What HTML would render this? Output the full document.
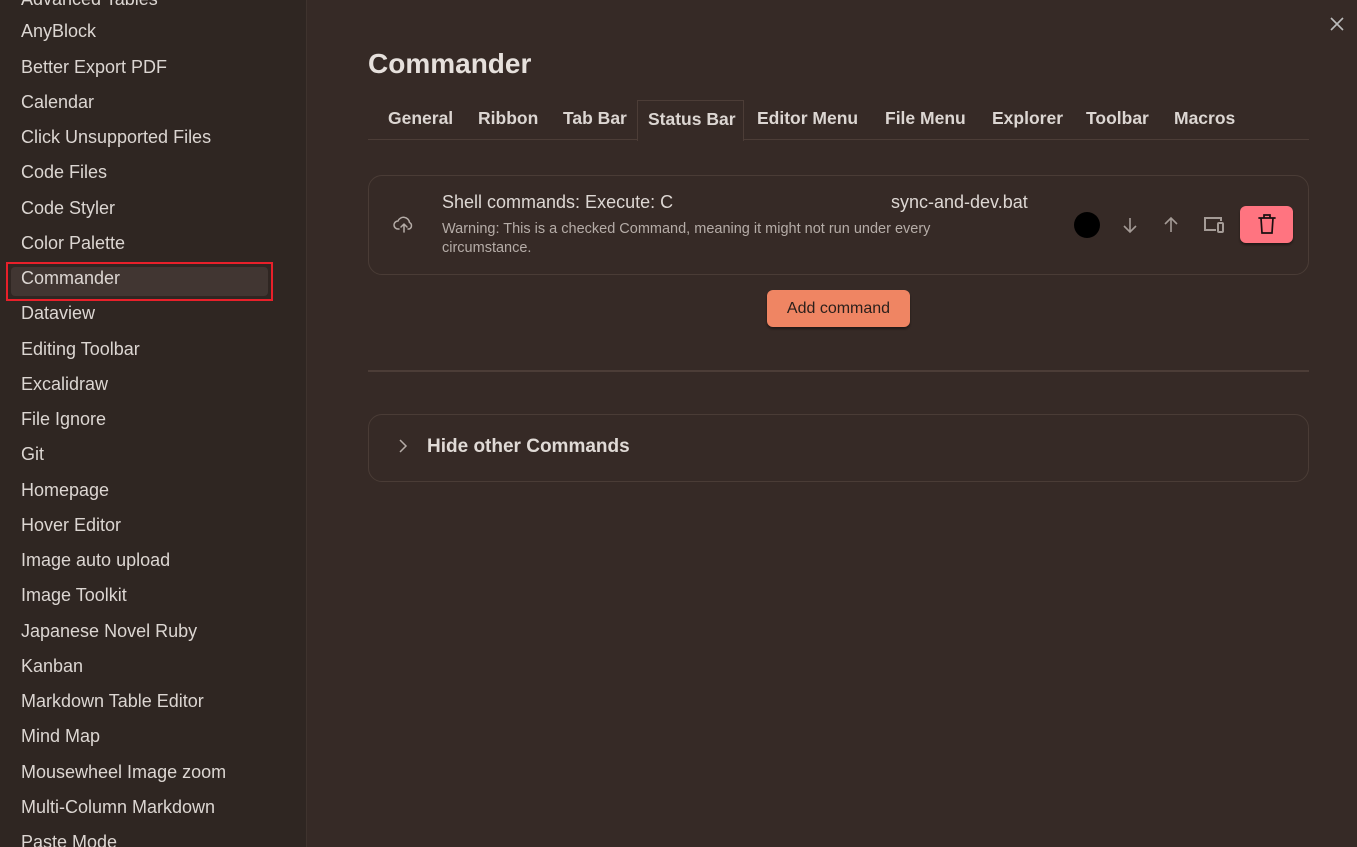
<!DOCTYPE html>
<html><head><meta charset="utf-8"><style>
*{margin:0;padding:0;box-sizing:border-box}
body{width:1357px;height:847px;overflow:hidden;background:#362a26;font-family:"Liberation Sans",sans-serif;color:#ddd;position:relative}
.side{position:absolute;left:0;top:0;width:307px;height:847px;background:#2f2622;border-right:1px solid #3f332e;overflow:hidden}
.side div{position:absolute;left:21px;font-size:18px;color:#dcd6d2;white-space:nowrap;line-height:22px}
.sel{position:absolute;left:6px;top:262px;width:267px;height:39px;border:2px solid #e8202a;}
.sel i{position:absolute;left:3px;top:3px;right:3px;bottom:3px;background:#413632;border-radius:4px}
h1{position:absolute;left:368px;top:48px;font-size:28px;font-weight:bold;color:#e6e0dc}
.tabs{position:absolute;left:368px;top:139px;width:941px;border-top:1px solid #4c3d37}
.tab{position:absolute;top:108px;font-size:17.5px;font-weight:bold;color:#dcd6d2}
.active{position:absolute;left:637px;top:100px;width:107px;height:41px;border:1px solid #4c3d37;border-bottom:none;background:#362a26}
.card{position:absolute;left:368px;top:175px;width:941px;height:100px;border:1px solid #4a3c36;border-radius:14px}
.t1{position:absolute;left:442px;top:192px;font-size:18px;color:#ddd7d3}
.t2{position:absolute;left:442px;top:220px;font-size:14.5px;color:#b5aca7;line-height:19px;width:560px}
.btn{position:absolute;left:767px;top:290px;width:143px;height:37px;background:#ef8563;border-radius:6px;color:#2a1f1b;font-size:16px;text-align:center;line-height:37px;box-shadow:0 2px 2px rgba(0,0,0,.4)}
.hr{position:absolute;left:368px;top:370px;width:941px;border-top:2px solid #4c3d37}
.card2{position:absolute;left:368px;top:414px;width:941px;height:68px;border:1px solid #4a3c36;border-radius:14px}
.del{position:absolute;left:1240px;top:206px;width:53px;height:37px;background:#ff7480;border-radius:6px;box-shadow:0 2px 2px rgba(0,0,0,.4)}
</style></head><body>
<div class="side">
<div style="top:-12px">Advanced Tables</div>
<div style="top:20px">AnyBlock</div>
<div style="top:56px">Better Export PDF</div>
<div style="top:91px">Calendar</div>
<div style="top:126px">Click Unsupported Files</div>
<div style="top:161px">Code Files</div>
<div style="top:197px">Code Styler</div>
<div style="top:232px">Color Palette</div>
<span class="sel"><i></i></span>
<div style="top:267px">Commander</div>
<div style="top:302px">Dataview</div>
<div style="top:338px">Editing Toolbar</div>
<div style="top:373px">Excalidraw</div>
<div style="top:408px">File Ignore</div>
<div style="top:443px">Git</div>
<div style="top:479px">Homepage</div>
<div style="top:514px">Hover Editor</div>
<div style="top:549px">Image auto upload</div>
<div style="top:584px">Image Toolkit</div>
<div style="top:620px">Japanese Novel Ruby</div>
<div style="top:655px">Kanban</div>
<div style="top:690px">Markdown Table Editor</div>
<div style="top:725px">Mind Map</div>
<div style="top:761px">Mousewheel Image zoom</div>
<div style="top:796px">Multi-Column Markdown</div>
<div style="top:831px">Paste Mode</div>
</div>
<svg style="position:absolute;left:1329px;top:16px" width="16" height="16"><path d="M2 2L14 14M14 2L2 14" stroke="#bbb" stroke-width="1.6"/></svg>
<h1>Commander</h1>
<div class="tabs"></div>
<div class="active"></div>
<span class="tab" style="left:388px">General</span>
<span class="tab" style="left:478px">Ribbon</span>
<span class="tab" style="left:563px">Tab Bar</span>
<span class="tab" style="left:648px;top:109px">Status Bar</span>
<span class="tab" style="left:757px">Editor Menu</span>
<span class="tab" style="left:885px">File Menu</span>
<span class="tab" style="left:992px">Explorer</span>
<span class="tab" style="left:1086px">Toolbar</span>
<span class="tab" style="left:1174px">Macros</span>
<div class="card"></div>
<svg style="position:absolute;left:393px;top:214px" width="22" height="20" viewBox="0 0 22 20" fill="none" stroke="#b5aca7" stroke-width="1.5" stroke-linecap="round"><path d="M6 15H5a4 4 0 0 1 0-8 6 6 0 0 1 11.5 1.5A3.5 3.5 0 0 1 16 15h-1"/><path d="M11 18v-8M8 13l3-3 3 3"/></svg>
<div class="t1">Shell commands: Execute: C<span style="position:absolute;left:449px;white-space:nowrap">sync-and-dev.bat</span></div>
<div class="t2">Warning: This is a checked Command, meaning it might not run under every circumstance.</div>
<div style="position:absolute;left:1074px;top:212px;width:26px;height:26px;border-radius:50%;background:#000"></div>
<svg style="position:absolute;left:1120px;top:215px" width="20" height="20" fill="none" stroke="#a49b96" stroke-width="1.6"><path d="M10 3v14M4 11l6 6 6-6"/></svg>
<svg style="position:absolute;left:1161px;top:215px" width="20" height="20" fill="none" stroke="#a49b96" stroke-width="1.6"><path d="M10 17V3M4 9l6-6 6 6"/></svg>
<svg style="position:absolute;left:1203px;top:214px" width="24" height="20" fill="none" stroke="#a49b96" stroke-width="2"><path d="M13 16H2V4h16v3"/><rect x="15" y="9" width="5" height="9" rx="1"/></svg>
<div class="del"><svg style="position:absolute;left:17px;top:7px" width="20" height="22" fill="none" stroke="#1a1010" stroke-width="1.7" stroke-linecap="round"><path d="M2 5h16M7 5V2h6v3M4 5l1 15h10l1-15"/></svg></div>
<div class="btn">Add command</div>
<div class="hr"></div>
<div class="card2"></div>
<svg style="position:absolute;left:398px;top:438px" width="10" height="16" fill="none" stroke="#b5aca7" stroke-width="1.5"><path d="M2 2l6 6-6 6"/></svg>
<div style="position:absolute;left:427px;top:436px;font-size:19px;color:#e0dad6;font-weight:bold">Hide other Commands</div>
</body></html>
